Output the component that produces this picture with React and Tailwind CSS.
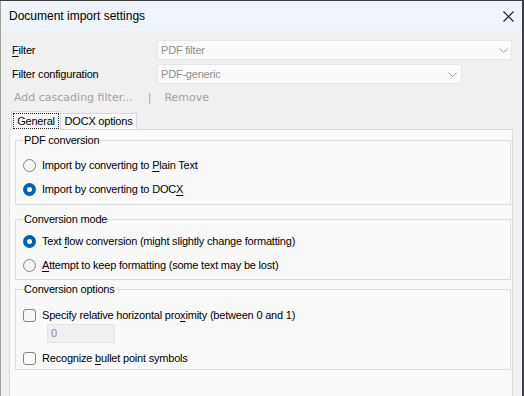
function Chevron() {
  return (
    <svg width="9" height="5" viewBox="0 0 9 5" className="shrink-0">
      <path d="M0.5 0.5 L4.5 4.5 L8.5 0.5" fill="none" stroke="#a0a0a0" strokeWidth="1" />
    </svg>
  )
}

function Radio({ checked }) {
  if (checked) {
    return (
      <span className="w-[13px] h-[13px] rounded-full bg-[#005fb8] flex items-center justify-center shrink-0">
        <span className="w-[5px] h-[5px] rounded-full bg-white" />
      </span>
    )
  }
  return <span className="w-[13px] h-[13px] rounded-full border border-[#858585] bg-[#f6f6f6] shrink-0" />
}

function Check() {
  return <span className="w-[13px] h-[13px] rounded-[3px] border border-[#858585] bg-[#f9f9f9] shrink-0" />
}

function Group({ title, className, children }) {
  return (
    <div className={"relative w-[496px] border border-[#dcdcdc] " + className}>
      <span className="absolute -top-[8px] left-[7px] px-[1px] bg-[#f9f9f9] leading-[14px]">{title}</span>
      {children}
    </div>
  )
}

function Option({ control, children, h = "h-[24px]" }) {
  return (
    <div className={"flex items-center gap-[6px] pl-[7px] " + h}>
      {control}
      <span>{children}</span>
    </div>
  )
}

export default function App() {
  return (
    <div
      className="w-[524px] h-[396px] flex flex-col overflow-hidden bg-[#3a3a48] text-[11px] tracking-[-0.2px] text-black"
      style={{ fontFamily: '"Liberation Sans", Arial, sans-serif' }}
    >
      <div className="h-[1px] bg-[#3c3c3c]" />
      <div className="flex flex-1 min-h-0">
        <div className="w-[522px] flex flex-col border-l border-[#9aa29a] bg-[#f0f0f0]">
          {/* title bar */}
          <div className="h-[30px] bg-[#eef4f9] flex items-center justify-between pl-[8px] pr-[8px] shrink-0">
            <span className="text-[12px] tracking-normal">Document import settings</span>
            <svg width="11" height="11" viewBox="0 0 11 11">
              <path d="M0.5 0.5 L10.5 10.5 M10.5 0.5 L0.5 10.5" stroke="#1a1a1a" strokeWidth="1.1" />
            </svg>
          </div>

          {/* filter rows */}
          <div className="flex items-center h-[20px] mt-[9px]">
            <span className="w-[156px] pl-[11px]">
              <span className="underline underline-offset-2">F</span>ilter
            </span>
            <div className="w-[355px] h-[20px] bg-[#fafafa] border border-[#e6e6e6] rounded-[2px] flex items-center justify-between pl-[3px] pr-[3px] text-[#8e8e8e]">
              <span>PDF filter</span>
              <Chevron />
            </div>
          </div>
          <div className="flex items-center h-[20px] mt-[4px]">
            <span className="w-[156px] pl-[11px]">Filter configuration</span>
            <div className="w-[305px] h-[20px] bg-[#fafafa] border border-[#e6e6e6] rounded-[2px] flex items-center justify-between pl-[3px] pr-[4px] text-[#8e8e8e]">
              <span>PDF-generic</span>
              <Chevron />
            </div>
          </div>

          <div
            className="flex items-center h-[16px] mt-[6px] pl-[13px] text-[#a3a3a3] tracking-normal"
            style={{ fontFamily: '"DejaVu Sans", Verdana, sans-serif' }}
          >
            <span>Add cascading filter...</span>
            <span className="ml-[15px]">|</span>
            <span className="ml-[13px]">Remove</span>
          </div>

          {/* tabs */}
          <div className="flex items-end pl-[10px] mt-[5px] h-[18px] shrink-0">
            <div className="w-[50px] h-[19px] -mb-[1px] relative z-10 bg-[#f9f9f9] border border-b-0 border-[#d9d9d9] p-[1px]">
              <div className="h-full border border-dotted border-[#222] flex items-center justify-center">General</div>
            </div>
            <div className="w-[76px] h-[16px] bg-[#f7f7f7] border border-b-0 border-l-0 border-[#d9d9d9] flex items-center justify-center">
              DOCX options
            </div>
          </div>

          {/* panel */}
          <div className="ml-[8px] w-[504px] flex-1 bg-[#f9f9f9] border border-b-0 border-[#dadada] pl-[5px] pt-[10px]">
            <Group title="PDF conversion" className="pt-[12px] pb-[3px]">
              <Option control={<Radio />}>
                Import by converting to <span className="underline underline-offset-2">P</span>lain Text
              </Option>
              <Option control={<Radio checked />}>
                Import by converting to DOC<span className="underline underline-offset-2">X</span>
              </Option>
            </Group>

            <Group title="Conversion mode" className="mt-[14px] pt-[9px] pb-[2px]">
              <Option control={<Radio checked />}>
                Text <span className="underline underline-offset-2">f</span>low conversion (might slightly change formatting)
              </Option>
              <Option control={<Radio />}>
                <span className="underline underline-offset-2">A</span>ttempt to keep formatting (some text may be lost)
              </Option>
            </Group>

            <Group title="Conversion options" className="mt-[9px] pt-[16px] pb-[1px]">
              <Option control={<Check />} h="h-[18px]">
                Specify relative horizontal pro<span className="underline underline-offset-2">x</span>imity (between 0 and 1)
              </Option>
              <div className="pl-[31px]">
                <div className="w-[68px] h-[19px] bg-[#efefef] border border-[#e3e3e3] flex items-center pl-[3px] text-[#8e8e8e]">
                  0
                </div>
              </div>
              <Option control={<Check />} h="h-[20px] mt-[5px]">
                Recognize <span className="underline underline-offset-2">b</span>ullet point symbols
              </Option>
            </Group>
          </div>
        </div>
        <div className="w-[2px] bg-[#3a3a48]" />
      </div>
    </div>
  )
}
